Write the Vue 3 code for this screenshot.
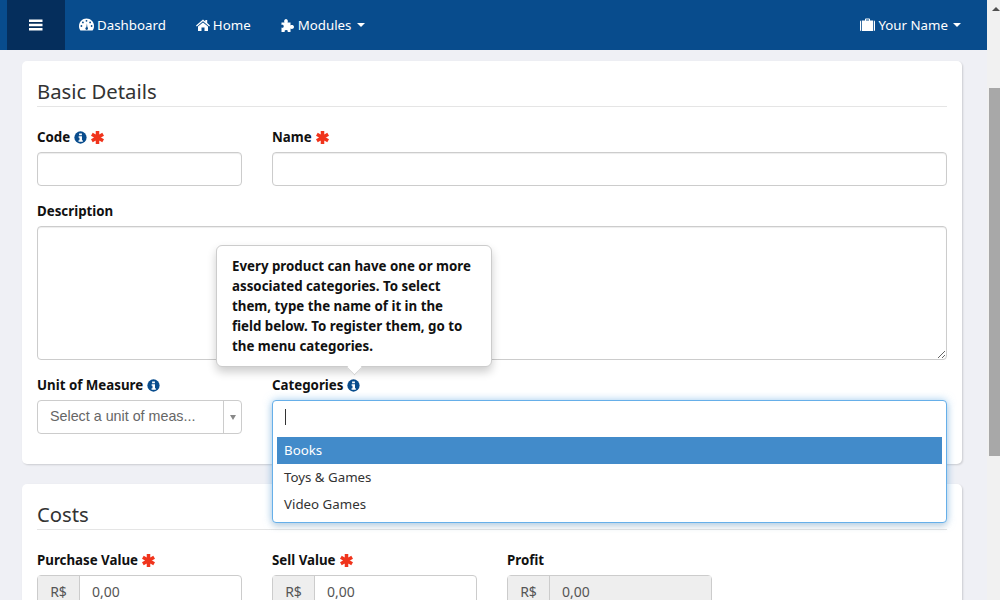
<template>
  <div class="page">
    <svg class="defs" width="0" height="0">
      <symbol id="i-info" viewBox="0 0 14 14">
        <circle cx="7" cy="7" r="6.6" fill="#084c8d" />
        <path d="M5.500 2.600h3v2.100h-3zM5 5.700h3.600V10h.9v1.500H4.900V10h1V7.200H5z" fill="#fff" />
      </symbol>
      <symbol id="i-star" viewBox="0 0 14 14">
        <g stroke="#f0341c" stroke-width="3.800">
          <path d="M7 0v14M.9 3.500l12.200 7M13.100 3.500L.9 10.500" />
        </g>
      </symbol>
    </svg>

    <div class="main">
      <nav class="navbar">
        <button class="toggle">
          <svg width="14" height="12" viewBox="0 0 14 12"><path d="M0 0.5h13.5v2.400H0zM0 4.800h13.500v2.400H0zM0 9.100h13.500v2.400H0z" fill="#fff" /></svg>
        </button>
        <a class="nav-link first">
          <svg width="15" height="13" viewBox="0 0 15 13"><path d="M7.500 .6C3.400.6 0 3.900 0 8c0 1.700.5 3.200 1.400 4.400h12.200C14.500 11.200 15 9.700 15 8 15 3.900 11.600.6 7.500.6z" fill="#fff" /><path d="M7.200 10.500L7.900 5.200 8.600 10.500z" fill="#084c8d" /><g fill="#084c8d"><circle cx="7.500" cy="2.800" r=".9" /><circle cx="3.900" cy="4.400" r=".9" /><circle cx="11.100" cy="4.400" r=".9" /><circle cx="2.400" cy="8" r=".9" /><circle cx="12.600" cy="8" r=".9" /><circle cx="7.700" cy="10.600" r="1.300" /></g></svg>
          Dashboard
        </a>
        <a class="nav-link">
          <svg width="14" height="12" viewBox="0 0 14 12"><path d="M7 .4l2.300 2V1h1.900v3l2.800 2.500-.8.900L7 2.300 .8 7.400 0 6.500zM2 7.500L7 3.400l5 4.100V12H8.500V8.500h-3V12H2z" fill="#fff" /></svg>
          Home
        </a>
        <a class="nav-link">
          <svg width="14" height="14" viewBox="0 0 14 14"><path d="M.5 4.500h3c-.8-1-.4-3.500 1.500-3.500s2.300 2.500 1.500 3.500h3v3c1-.8 3.500-.4 3.500 1.500s-2.500 2.300-3.500 1.500V14H6.500c.8-1 .3-2-1.300-2s-2.100 1-1.300 2H.5V9.500c1 .7 2.200.2 2.200-1.300S1.500 6.300.5 7z" fill="#fff" /></svg>
          Modules <span class="caret"></span>
        </a>
        <a class="nav-link user">
          <svg width="15" height="13" viewBox="0 0 15 13"><path d="M5 2.500V1.200C5 .7 5.400.4 5.800.4h3.400c.4 0 .8.300.8.800v1.300h-1V1.400H6v1.100zM2 2.500h11V13H2zM0 3.800c0-.7.500-1.300 1.200-1.300V13C.5 13 0 12.400 0 11.700zM13.800 2.500c.7 0 1.200.6 1.200 1.300v7.900c0 .7-.5 1.300-1.200 1.300z" fill="#fff" /></svg>
          Your Name <span class="caret"></span>
        </a>
      </nav>

      <div class="content">
        <section class="card">
          <h2>Basic Details</h2>
          <div class="row">
            <div class="field">
              <label>Code <svg class="ic"><use href="#i-info" /></svg> <svg class="ic"><use href="#i-star" /></svg></label>
              <input class="control" type="text" />
            </div>
            <div class="field wide">
              <label>Name <svg class="ic"><use href="#i-star" /></svg></label>
              <input class="control" type="text" />
            </div>
            <div class="field full">
              <label>Description</label>
              <textarea class="control area"></textarea>
            </div>
            <div class="field">
              <label>Unit of Measure <svg class="ic"><use href="#i-info" /></svg></label>
              <div class="select">
                <span class="select-text">Select a unit of meas...</span>
                <span class="select-arrow"><i></i></span>
              </div>
            </div>
            <div class="field wide cat">
              <div class="popover">
                Every product can have one or more associated categories. To select them, type the name of it in the field below. To register them, go to the menu categories.
              </div>
              <label>Categories <svg class="ic"><use href="#i-info" /></svg></label>
              <div class="dropdown">
                <div class="search"><span class="cursor"></span></div>
                <div
                  v-for="(opt, i) in categories"
                  :key="opt"
                  class="option"
                  :class="{ active: i === 0 }"
                >{{ opt }}</div>
              </div>
            </div>
          </div>
        </section>

        <section class="card">
          <h2>Costs</h2>
          <div class="row">
            <div class="field" v-for="c in costs" :key="c.label">
              <label>{{ c.label }} <svg v-if="c.required" class="ic"><use href="#i-star" /></svg></label>
              <div class="group" :class="{ off: !c.required }">
                <span class="addon">R$</span>
                <span class="value">0,00</span>
              </div>
            </div>
          </div>
        </section>
      </div>
    </div>

    <div class="scrollbar">
      <div class="arrow"></div>
      <div class="thumb"></div>
    </div>
  </div>
</template>

<script setup>
const categories = ['Books', 'Toys & Games', 'Video Games']
const costs = [
  { label: 'Purchase Value', required: true },
  { label: 'Sell Value', required: true },
  { label: 'Profit', required: false }
]
</script>

<style>
html, body {
  margin: 0;
  overflow: hidden;
}
</style>

<style scoped>
.page {
  display: flex;
  width: 1000px;
  height: 600px;
  overflow: hidden;
  background: #eff0f5;
  font-family: "Noto Sans", "Open Sans", sans-serif;
  font-size: 14px;
  color: #333;
}

.defs {
  position: absolute;
}

.main {
  width: 987px;
  flex: none;
}

.navbar {
  display: flex;
  align-items: center;
  height: 50px;
  padding-left: 7px;
  background: #084c8d;
  color: #fff;
}

.toggle {
  display: flex;
  align-items: center;
  justify-content: center;
  width: 58px;
  height: 50px;
  padding: 0;
  border: 0;
  background: #052e5c;
}

.nav-link {
  display: flex;
  align-items: center;
  gap: 3px;
  margin-left: 30px;
  padding-bottom: 1px;
  font-size: 13.3px;
  white-space: nowrap;
}

.nav-link.first {
  margin-left: 14px;
}

.nav-link.user {
  margin-left: auto;
  margin-right: 26px;
}

.caret {
  width: 0;
  height: 0;
  margin-left: 2px;
  border-top: 4px solid #fff;
  border-left: 4px solid transparent;
  border-right: 4px solid transparent;
}

.content {
  padding: 11px 25px 0 22px;
}

.card {
  height: 403px;
  margin-bottom: 20px;
  padding: 15px;
  box-sizing: border-box;
  background: #fff;
  border-radius: 5px;
  box-shadow: 1px 1px 2px rgba(0, 0, 0, 0.15);
}

h2 {
  height: 30px;
  margin: 0 0 20px;
  border-bottom: 1px solid #e5e5e5;
  font-size: 20.3px;
  font-weight: 400;
  line-height: 31px;
  color: #333;
}

.row {
  display: grid;
  grid-template-columns: repeat(4, 205px);
  column-gap: 30px;
  row-gap: 15px;
}

.wide {
  grid-column: span 3;
}

.full {
  grid-column: span 4;
}

.field {
  position: relative;
  min-width: 0;
}

label {
  display: flex;
  align-items: center;
  gap: 4px;
  height: 20px;
  margin-bottom: 5px;
  font-size: 13.3px;
  font-weight: 700;
  color: #111;
}

.ic {
  width: 13px;
  height: 13px;
}

.control {
  display: block;
  width: 100%;
  height: 34px;
  box-sizing: border-box;
  border: 1px solid #ccc;
  border-radius: 4px;
  background: #fff;
  box-shadow: inset 0 1px 1px rgba(0, 0, 0, 0.075);
  outline: none;
}

.area {
  height: 134px;
  resize: vertical;
}

.select {
  display: flex;
  height: 34px;
  box-sizing: border-box;
  border: 1px solid #ccc;
  border-radius: 4px;
  font-family: "Liberation Sans", Arial, sans-serif;
  font-size: 14.3px;
  color: #666;
}

.select-text {
  flex: 1;
  padding-left: 12px;
  line-height: 31px;
  white-space: nowrap;
  overflow: hidden;
}

.select-arrow {
  display: flex;
  align-items: center;
  justify-content: center;
  width: 17px;
  border-left: 1px solid #ccc;
}

.select-arrow i {
  margin-top: 1px;
  border-top: 5px solid #888;
  border-left: 3px solid transparent;
  border-right: 3px solid transparent;
}

.popover {
  position: absolute;
  left: -56px;
  bottom: 67px;
  width: 276px;
  box-sizing: border-box;
  padding: 10px 18px 10px 15px;
  border: 1px solid #ccc;
  border-radius: 6px;
  background: #fff;
  box-shadow: 0 5px 10px rgba(0, 0, 0, 0.2);
  font-size: 13.3px;
  font-weight: 700;
  line-height: 20px;
  color: #111;
  z-index: 3;
}

.popover::after {
  content: "";
  position: absolute;
  left: 130px;
  bottom: -9px;
  width: 14px;
  height: 14px;
  background: #fff;
  border-right: 1px solid #ccc;
  border-bottom: 1px solid #ccc;
  transform: rotate(45deg) scale(0.72);
  transform-origin: center;
}

.dropdown {
  position: absolute;
  top: 25px;
  left: 0;
  right: 0;
  height: 123px;
  box-sizing: border-box;
  padding: 0 4px;
  border: 1px solid #66afe9;
  border-radius: 4px;
  background: #fff;
  box-shadow: 0 0 8px rgba(102, 175, 233, 0.6), 0 4px 6px rgba(0, 0, 0, 0.1);
  z-index: 2;
}

.search {
  display: flex;
  align-items: center;
  height: 36px;
  padding-left: 8px;
}

.cursor {
  width: 1px;
  height: 16px;
  margin-top: -5px;
  background: #333;
}

.option {
  height: 27px;
  padding-left: 7px;
  font-size: 13.3px;
  line-height: 27px;
  color: #333;
}

.option.active {
  background: #428bca;
  color: #fff;
}

.group {
  display: flex;
  height: 34px;
  box-sizing: border-box;
  border: 1px solid #ccc;
  border-radius: 4px;
  color: #555;
}

.addon {
  width: 42px;
  flex: none;
  box-sizing: border-box;
  border-right: 1px solid #ccc;
  background: #eee;
  text-align: center;
  line-height: 32px;
}

.value {
  flex: 1;
  padding-left: 12px;
  line-height: 32px;
}

.group.off .value {
  background: #eee;
}

.scrollbar {
  position: relative;
  width: 13px;
  flex: none;
  background: #f1f1f1;
}

.arrow {
  position: absolute;
  top: 7px;
  left: 5px;
  border-bottom: 4px solid #505050;
  border-left: 4px solid transparent;
  border-right: 4px solid transparent;
}

.thumb {
  position: absolute;
  top: 88px;
  left: 2px;
  width: 11px;
  height: 368px;
  background: #a8a8a8;
}
</style>
